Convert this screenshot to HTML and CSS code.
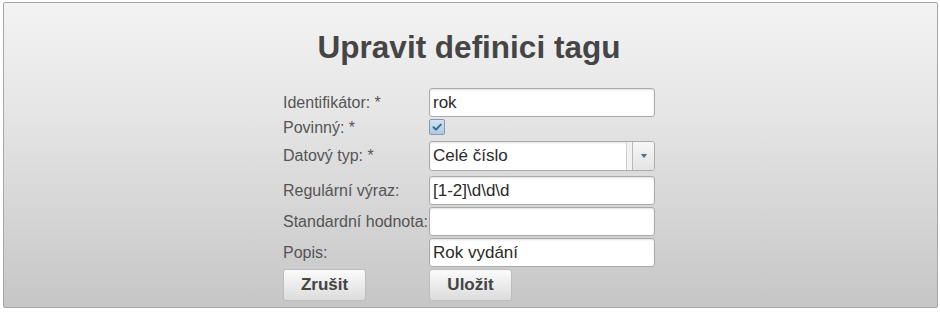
FILE: index.html
```html
<!DOCTYPE html>
<html lang="cs">
<head>
<meta charset="utf-8">
<title>Upravit definici tagu</title>
<link rel="stylesheet" href="styles.css">
</head>
<body>
<div class="panel">
  <h1 class="title">Upravit definici tagu</h1>
  <form class="form">
    <label class="lbl r1">Identifikátor: *</label>
    <div class="field r1"><div class="input">rok</div></div>

    <label class="lbl r2 lbl-check">Povinný: *</label>
    <div class="field r2">
      <span class="check">
        <svg width="14" height="14" viewBox="0 0 14 14"><path d="M3.5 7.2 L6 9.6 L10.8 4.6" fill="none" stroke="#2f6a99" stroke-width="2" stroke-linecap="round" stroke-linejoin="round"/></svg>
      </span>
    </div>

    <label class="lbl r3">Datový typ: *</label>
    <div class="field r3">
      <div class="select">
        <div class="select-value">Celé číslo</div>
        <div class="select-gap"></div>
        <div class="select-btn"><span class="tri"></span></div>
      </div>
    </div>

    <label class="lbl r4">Regulární výraz:</label>
    <div class="field r4"><div class="input">[1-2]\d\d\d</div></div>

    <label class="lbl r5">Standardní hodnota:</label>
    <div class="field r5"><div class="input"></div></div>

    <label class="lbl r6">Popis:</label>
    <div class="field r6"><div class="input">Rok vydání</div></div>

    <div class="r7"><button type="button" class="btn">Zrušit</button></div>
    <div class="r7"><button type="button" class="btn">Uložit</button></div>
  </form>
</div>
</body>
</html>
```

FILE: styles.css
```css
html, body {
  margin: 0;
  padding: 0;
  background: #ffffff;
}
body {
  font-family: "Liberation Sans", Arial, sans-serif;
}
.panel {
  box-sizing: border-box;
  margin: 2px 3px 0 3px;
  width: 935px;
  height: 306px;
  border: 1px solid #a6a6a6;
  border-radius: 2px;
  background: linear-gradient(to bottom, #f3f3f3 0%, #e6e6e6 35%, #c6c6c6 100%);
  padding-right: 3px;
}
.title {
  margin: 26px 0 0 0;
  text-align: center;
  font-size: 31.5px;
  line-height: 37px;
  font-weight: bold;
  color: #454545;
}
.form {
  margin: 22px auto 0 auto;
  display: grid;
  width: 372px;
  grid-template-columns: 146px 226px;
  grid-template-rows: 30px 23px 35px 31px 31px 31px 33px;
}
.lbl {
  font-size: 16px;
  color: #555;
  line-height: 29px;
  white-space: nowrap;
  align-self: start;
}
.lbl.r3 { line-height: 30px; }
.lbl-check {
  line-height: 18px;
  margin-top: 1px;
}
.field {
  align-self: start;
}
.input {
  box-sizing: border-box;
  height: 29px;
  width: 226px;
  border: 1px solid #ababab;
  border-radius: 3px;
  background: #fff;
  box-shadow: inset 0 1px 2px rgba(0,0,0,0.12);
  font-size: 17px;
  color: #2a2a2a;
  line-height: 27px;
  padding: 0 3px;
  white-space: nowrap;
}
.check {
  display: block;
  box-sizing: border-box;
  margin-top: 1px;
  width: 16px;
  height: 16px;
  border: 1px solid #7d9cb6;
  border-radius: 2px;
  background: linear-gradient(to bottom, #d2e3f0, #b0c9de);
}
.check svg { display: block; }
.select {
  box-sizing: border-box;
  display: flex;
  height: 30px;
  width: 226px;
  border: 1px solid #ababab;
  border-radius: 3px;
  background: #fff;
  box-shadow: inset 0 1px 2px rgba(0,0,0,0.12);
  overflow: hidden;
}
.select-value {
  flex: 1;
  font-size: 17px;
  color: #2a2a2a;
  line-height: 28px;
  padding: 0 3px;
  border-right: 1px solid #d0d0d0;
}
.select-gap {
  width: 5px;
  background: #f2f2f2;
  border-right: 1px solid #b9b9b9;
}
.select-btn {
  width: 21px;
  background: linear-gradient(to bottom, #f7f7f7, #e4e4e4);
  display: flex;
  align-items: center;
  justify-content: center;
}
.tri {
  width: 0;
  height: 0;
  border-left: 3.5px solid transparent;
  border-right: 3.5px solid transparent;
  border-top: 4px solid #5b6f82;
  filter: drop-shadow(0 0 1px #a9cbe6);
}
.r7 {
  align-self: start;
}
.btn {
  box-sizing: border-box;
  width: 83px;
  height: 32px;
  border: 1px solid #bdbdbd;
  border-radius: 3px;
  background: linear-gradient(to bottom, #fbfbfb, #dcdcdc);
  font-family: "Liberation Sans", Arial, sans-serif;
  font-size: 17px;
  font-weight: bold;
  color: #444;
  padding: 0;
  margin: 0;
}
```
